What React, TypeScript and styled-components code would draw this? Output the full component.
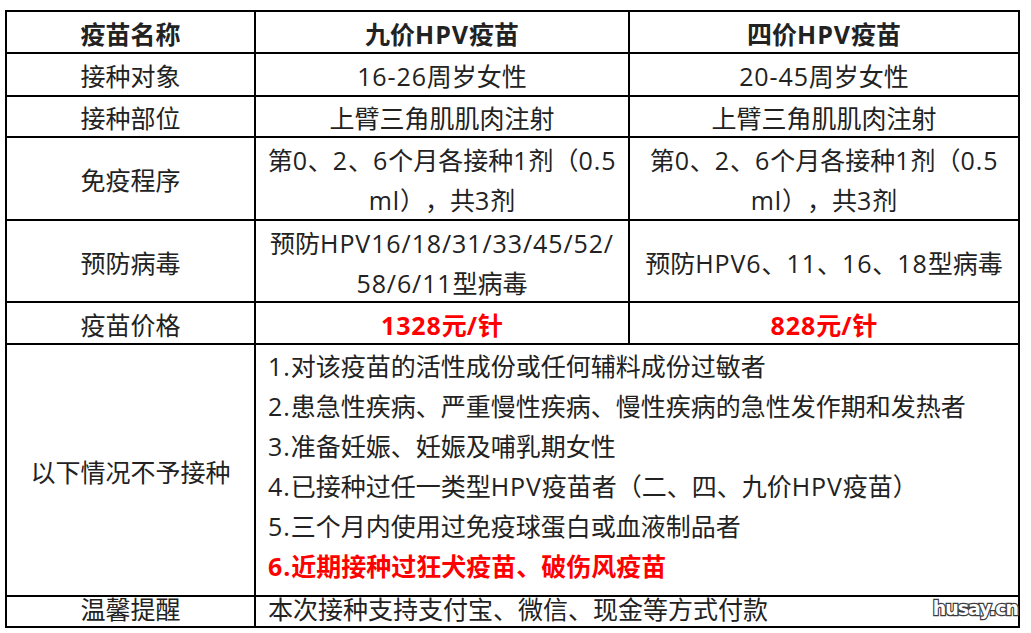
import React from "react";
import styled, { createGlobalStyle } from "styled-components";

const GlobalStyle = createGlobalStyle`
  html, body { margin: 0; padding: 0; background: #ffffff; }
  body {
    font-family: "Open Sans", "Noto Sans CJK SC", sans-serif;
    color: #222222;
    text-spacing-trim: space-all;
  }
`;

const Page = styled.div`
  position: relative;
  width: 1031px;
  height: 633px;
  padding: 10px 0 0 5px;
  box-sizing: border-box;
  overflow: hidden;
`;

const Grid = styled.div`
  display: grid;
  grid-template-columns: 249px 374px 390px;
  grid-template-rows: 42px 43px 41px 83px 82px 42px 252px 31px;
  width: max-content;
  border-top: 2px solid #000;
  border-left: 2px solid #000;
`;

const Cell = styled.div<{ $span?: number; $left?: boolean; $bold?: boolean; $red?: boolean; $top?: boolean; $short?: boolean }>`
  box-sizing: border-box;
  grid-column: span ${(p) => p.$span ?? 1};
  border-right: 2px solid #000;
  border-bottom: 2px solid #000;
  display: flex;
  flex-direction: column;
  justify-content: ${(p) => (p.$top ? "flex-start" : "center")};
  align-items: ${(p) => (p.$left ? "flex-start" : "center")};
  padding: ${(p) => (p.$top ? "0" : p.$short ? "0 0 6px" : "3px 0 0")};
  padding-left: ${(p) => (p.$left ? "12px" : "0")};
  font-size: 25px;
  line-height: ${(p) => (p.$short ? "30px" : "40px")};
  white-space: nowrap;
  text-align: ${(p) => (p.$left ? "left" : "center")};
  font-weight: ${(p) => (p.$bold ? 700 : 400)};
  color: ${(p) => (p.$red ? "#ff0000" : "#222222")};
`;

const Line = styled.span`
  display: block;
`;

const Latin = styled.span`
  letter-spacing: 0.9px;
`;

const List = styled.div`
  display: flex;
  flex-direction: column;
  margin-top: 1px;
`;

const Item = styled.div<{ $red?: boolean }>`
  line-height: 40px;
  font-weight: ${(p) => (p.$red ? 700 : 400)};
  color: ${(p) => (p.$red ? "#ff0000" : "#222222")};
`;

const Watermark = styled.div`
  position: absolute;
  right: 13px;
  bottom: 15px;
  font-family: "DejaVu Sans", "Liberation Sans", sans-serif;
  font-weight: 700;
  font-size: 19px;
  line-height: 20px;
  letter-spacing: -1px;
  color: #ffffff;
  -webkit-text-stroke: 2.4px #3c3c3c;
  paint-order: stroke fill;
`;

function T({ s }: { s: string }) {
  const parts = s.split(/([A-Za-z0-9.\-\/]+)/);
  return (
    <Line>
      {parts.map((p, i) =>
        i % 2 === 1 ? <Latin key={i}>{p}</Latin> : <React.Fragment key={i}>{p}</React.Fragment>
      )}
    </Line>
  );
}

const items = [
  "1.对该疫苗的活性成份或任何辅料成份过敏者",
  "2.患急性疾病、严重慢性疾病、慢性疾病的急性发作期和发热者",
  "3.准备妊娠、妊娠及哺乳期女性",
  "4.已接种过任一类型HPV疫苗者（二、四、九价HPV疫苗）",
  "5.三个月内使用过免疫球蛋白或血液制品者",
];

export default function App() {
  return (
    <>
      <GlobalStyle />
      <Page>
        <Grid>
          <Cell $bold>疫苗名称</Cell>
          <Cell $bold><T s="九价HPV疫苗" /></Cell>
          <Cell $bold><T s="四价HPV疫苗" /></Cell>

          <Cell>接种对象</Cell>
          <Cell><T s="16-26周岁女性" /></Cell>
          <Cell><T s="20-45周岁女性" /></Cell>

          <Cell>接种部位</Cell>
          <Cell>上臂三角肌肌肉注射</Cell>
          <Cell>上臂三角肌肌肉注射</Cell>

          <Cell>免疫程序</Cell>
          <Cell>
            <T s="第0、2、6个月各接种1剂（0.5" />
            <T s="ml），共3剂" />
          </Cell>
          <Cell>
            <T s="第0、2、6个月各接种1剂（0.5" />
            <T s="ml），共3剂" />
          </Cell>

          <Cell>预防病毒</Cell>
          <Cell>
            <T s="预防HPV16/18/31/33/45/52/" />
            <T s="58/6/11型病毒" />
          </Cell>
          <Cell><T s="预防HPV6、11、16、18型病毒" /></Cell>

          <Cell>疫苗价格</Cell>
          <Cell $bold $red><T s="1328元/针" /></Cell>
          <Cell $bold $red><T s="828元/针" /></Cell>

          <Cell>以下情况不予接种</Cell>
          <Cell $span={2} $left $top>
            <List>
              {items.map((t) => (
                <Item key={t}><T s={t} /></Item>
              ))}
              <Item $red><T s="6.近期接种过狂犬疫苗、破伤风疫苗" /></Item>
            </List>
          </Cell>

          <Cell $short>温馨提醒</Cell>
          <Cell $span={2} $left $short>本次接种支持支付宝、微信、现金等方式付款</Cell>
        </Grid>
        <Watermark>husay.cn</Watermark>
      </Page>
    </>
  );
}
